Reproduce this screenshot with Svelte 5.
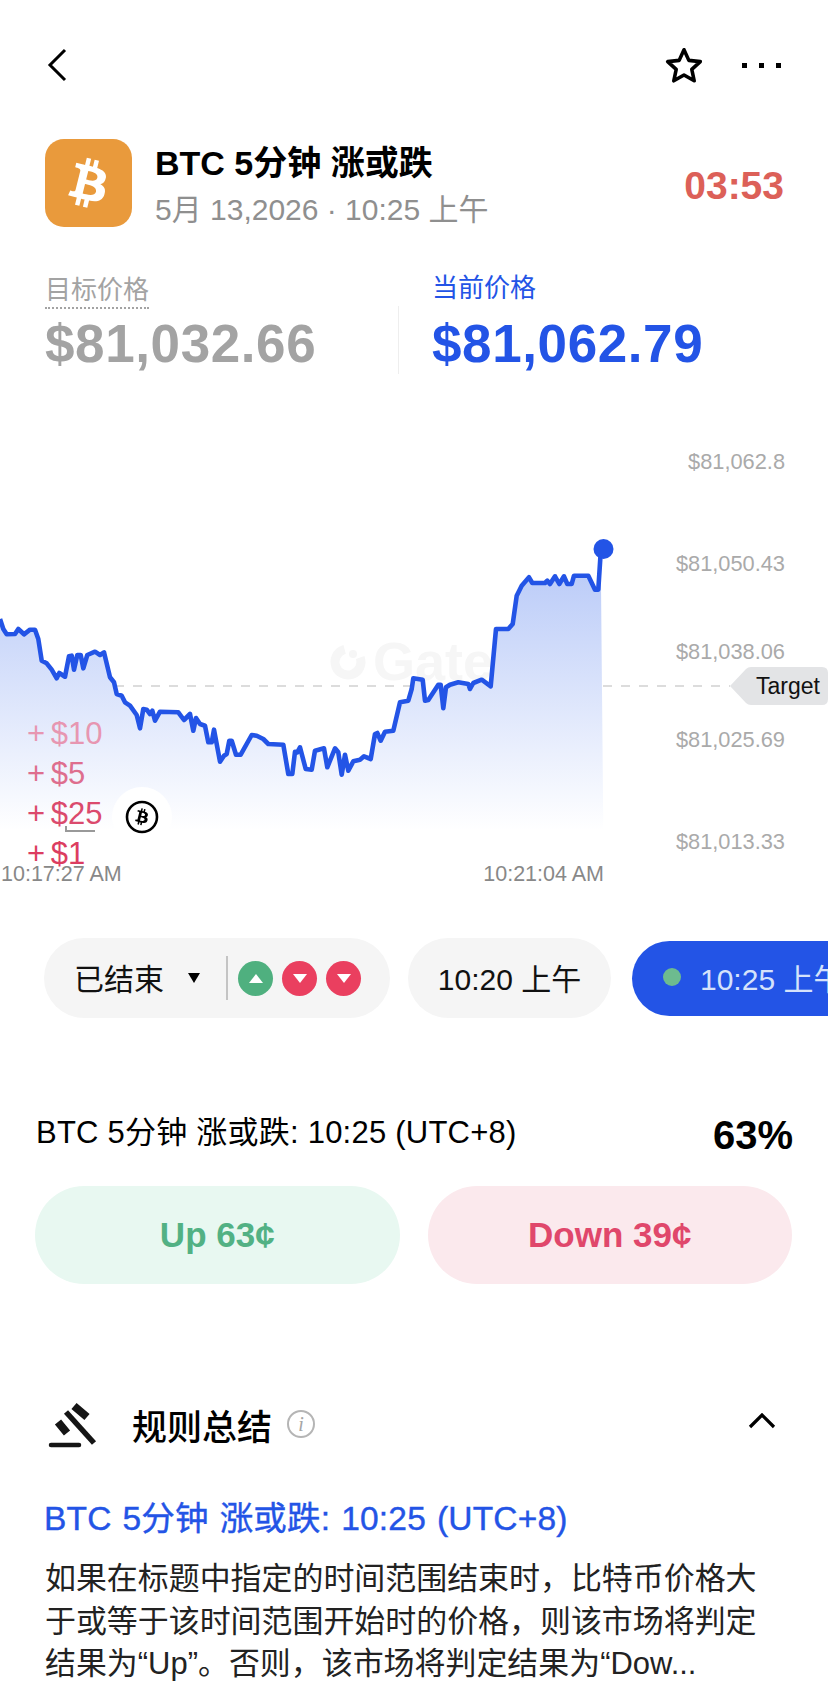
<script>
  const z2 = [[0,600],[10,630],[20,646],[45,645],[55,630],[72,646],[90,632],[105,632],[115,660],[125,725],[140,733],[155,752],[170,778],[178,762],[195,773],[207,712],[215,710],[222,752],[232,708],[242,708],[250,748],[262,708],[285,698],[300,708],[312,700],[330,775],[342,790],[350,825],[365,830],[375,850],[390,860],[410,888],[420,928],[430,870],[440,872],[450,885],[457,875],[465,905],[480,878],[535,880],[552,903],[570,885],[580,935],[588,897],[600,915],[615,920],[625,970],[635,970],[642,932],[660,1028],[672,1010],[680,1005],[688,965],[695,965],[708,1007],[722,1007],[755,948],[770,950],[790,960],[805,975],[850,977],[865,1065],[877,1065],[885,998],[892,1000],[900,985],[917,1050],[935,1052],[945,995],[972,988],[982,1045],[1005,988],[1015,1000],[1025,1067],[1035,1007],[1045,1055],[1060,1027],[1080,1022],[1092,1012],[1112,1020],[1125,945],[1132,942],[1142,965],[1155,938],[1180,935],[1200,850],[1225,845],[1235,810],[1240,778]];
  const z3 = [[68,782],[75,845],[85,843],[115,797],[122,797],[130,868],[138,805],[150,797],[175,790],[205,795],[210,810],[220,792],[245,782],[272,802],[288,630],[325,630],[338,615],[350,530],[365,500],[387,475],[397,492],[435,492],[442,485],[450,495],[465,472],[478,495],[492,472],[502,495],[515,495],[522,470],[565,470],[585,512],[595,512],[602,400]];
  const pts = [
    ...z2.map(([x, y]) => [x / 3, y / 3 + 420]),
    ...z3.map(([x, y]) => [x / 3 + 400, y / 3 + 420])
  ];
  const line = 'M' + pts.map(([x, y]) => x.toFixed(1) + ' ' + y.toFixed(1)).join('L');
  const area = line + 'L603.3 830L0 830Z';
  const axis = [
    { t: '$81,062.8', y: 462 },
    { t: '$81,050.43', y: 564 },
    { t: '$81,038.06', y: 652 },
    { t: '$81,025.69', y: 740 },
    { t: '$81,013.33', y: 842 }
  ];
  const bets = [
    { t: '+ $10', c: '#e796b1' },
    { t: '+ $5', c: '#de6e8e' },
    { t: '+ $25', c: '#db4a6d' },
    { t: '+ $1', c: '#dc3d60' }
  ];
  const btc = 'M17.288 10.291c.24-1.59-.974-2.45-2.64-3.03l.54-2.153-1.315-.33-.525 2.107c-.345-.087-.705-.167-1.064-.25l.526-2.127-1.32-.33-.54 2.165c-.285-.067-.565-.132-.84-.2l-1.815-.45-.35 1.407s.975.225.955.236c.535.136.63.486.615.766l-1.477 5.92c-.075.166-.24.406-.614.314.015.02-.96-.24-.96-.24l-.66 1.51 1.71.426.93.242-.54 2.19 1.32.327.54-2.17c.36.1.705.19 1.05.273l-.51 2.154 1.32.33.545-2.19c2.24.427 3.93.257 4.64-1.774.57-1.637-.03-2.58-1.217-3.196.854-.193 1.5-.76 1.68-1.93h.01zm-3.01 4.22c-.404 1.64-3.157.75-4.05.53l.72-2.9c.896.23 3.757.67 3.33 2.37zm.41-4.24c-.37 1.49-2.662.735-3.405.55l.654-2.64c.744.18 3.137.524 2.75 2.084v.006z';
</script>

<div class="page">
  <nav class="nav">
    <svg class="back" width="20" height="34" viewBox="0 0 20 34" aria-label="back">
      <path d="M18 2 3 17l15 15" />
    </svg>
    <div class="nav-right">
      <svg class="star" width="40" height="38" viewBox="0 0 38 36" aria-label="favourite">
        <path d="M19 3.5 23.6 13.6 34.5 14.8 26.4 22.2 28.7 33 19 27.5 9.3 33 11.6 22.2 3.5 14.8 14.4 13.6Z" />
      </svg>
      <div class="dots"><i></i><i></i><i></i></div>
    </div>
  </nav>

  <header class="head">
    <div class="logo">
      <svg width="79" height="79" viewBox="0 0 24 24"><path d={btc} fill="#fff" fill-rule="evenodd" /></svg>
    </div>
    <div class="head-text">
      <h1>BTC 5分钟 涨或跌</h1>
      <p>5月 13,2026 · 10:25 上午</p>
    </div>
    <div class="timer">03:53</div>
  </header>

  <section class="prices">
    <div class="price target">
      <span class="plabel">目标价格</span>
      <strong>$81,032.66</strong>
    </div>
    <div class="price current">
      <span class="plabel">当前价格</span>
      <strong>$81,062.79</strong>
    </div>
  </section>

  <div class="chart">
    <svg width="828" height="450" viewBox="0 440 828 450">
      <defs>
        <linearGradient id="fill" gradientUnits="userSpaceOnUse" x1="0" y1="560" x2="0" y2="832">
          <stop offset="0" stop-color="#2f62ea" stop-opacity="0.34" />
          <stop offset="1" stop-color="#2f62ea" stop-opacity="0" />
        </linearGradient>
      </defs>
      <circle class="mark-ring" cx="348" cy="663" r="13" />
      <circle cx="353" cy="655" r="4" fill="#f6f6f6" />
      <text class="mark" x="373" y="681">Gate</text>
      <path class="dash" d="M115 687H413M603 687H730" />
      <path d={area} fill="url(#fill)" />
      <path class="line" d={line} />
      <circle cx="603.5" cy="550" r="10" fill="#2354e6" />
      {#each axis as a}
        <text class="axis" x="785" y={a.y + 8} text-anchor="end">{a.t}</text>
      {/each}
      <path d="M730 687 746 670Q748 668 751 668H822Q828 668 828 674V700Q828 706 822 706H751Q748 706 746 704Z" fill="#e3e4e6" />
      <text class="tag" x="756" y="695">Target</text>
      <text class="time" x="1" y="882">10:17:27 AM</text>
      <text class="time" x="604" y="882" text-anchor="end">10:21:04 AM</text>
    </svg>
    <ul class="bets">
      {#each bets as b}
        <li style="color:{b.c}">{b.t}</li>
      {/each}
    </ul>
    <span class="bracket"></span>
    <span class="coin">
      <svg width="36" height="36" viewBox="0 0 36 36">
        <circle cx="18" cy="18" r="15" fill="none" stroke="#000" stroke-width="2.6" />
        <g transform="translate(4.5 4.5) scale(1.125)"><path d={btc} fill="#000" fill-rule="evenodd" /></g>
      </svg>
    </span>
  </div>

  <div class="pills">
    <div class="pill first">
      <span class="ended">已结束</span>
      <i class="caret"></i>
      <i class="sep"></i>
      <span class="res up"><i></i></span>
      <span class="res down"><i></i></span>
      <span class="res down"><i></i></span>
    </div>
    <div class="pill second">10:20 上午</div>
    <div class="pill live"><i class="live-dot"></i>10:25 上午</div>
  </div>

  <div class="market">
    <span>BTC 5分钟 涨或跌: 10:25 (UTC+8)</span>
    <strong>63%</strong>
  </div>

  <div class="buttons">
    <button class="buy up">Up 63¢</button>
    <button class="buy down">Down 39¢</button>
  </div>

  <section class="rules">
    <div class="rules-head">
      <svg class="gavel" width="70" height="60" viewBox="0 0 70 60">
        <path d="M26 18 54 49" stroke-width="5.5" />
        <path d="M18 28 27 39M34 12 47 23" stroke-width="8" />
        <path d="M11 51H39" stroke-width="4.5" stroke-linecap="round" />
      </svg>
      <h2>规则总结</h2>
      <span class="info">i</span>
      <svg class="up-chev" width="28" height="16" viewBox="0 0 28 16"><path d="M2 14 14 2l12 12" /></svg>
    </div>
    <h3>BTC 5分钟 涨或跌: 10:25 (UTC+8)</h3>
    <p>如果在标题中指定的时间范围结束时，比特币价格大于或等于该时间范围开始时的价格，则该市场将判定结果为“Up”。否则，该市场将判定结果为“Dow...</p>
  </section>
</div>

<style>
  :global(body) {
    margin: 0;
    background: #fff;
  }
  .page {
    width: 828px;
    height: 1696px;
    overflow: hidden;
    position: relative;
    background: #fff;
    color: #000;
    font-family: "Liberation Sans", "Noto Sans CJK SC", sans-serif;
  }
  .nav {
    display: flex;
    justify-content: space-between;
    align-items: center;
    height: 36px;
    padding: 47px 47px 0 47px;
  }
  .back path {
    fill: none;
    stroke: #000;
    stroke-width: 3;
  }
  .nav-right {
    display: flex;
    align-items: center;
    gap: 38px;
  }
  .star path {
    fill: none;
    stroke: #000;
    stroke-width: 3.4;
    stroke-linejoin: round;
  }
  .dots {
    display: flex;
    gap: 12px;
  }
  .dots i {
    width: 5px;
    height: 5px;
    background: #000;
  }
  .head {
    display: flex;
    align-items: center;
    margin-top: 50px;
    padding: 0 44px 0 45px;
  }
  .logo {
    width: 87px;
    height: 88px;
    border-radius: 19px;
    background: #e99a3c;
    display: flex;
    align-items: center;
    justify-content: center;
  }
  .head-text {
    margin-left: 23px;
    padding-top: 6px;
  }
  h1 {
    margin: 0;
    font-size: 34px;
    line-height: 48px;
    font-weight: 700;
  }
  .head-text p {
    margin: 0;
    font-size: 30px;
    line-height: 46px;
    color: #8f8f8f;
  }
  .timer {
    margin-left: auto;
    padding-top: 6px;
    font-size: 39px;
    font-weight: 700;
    color: #dc6058;
  }
  .prices {
    display: grid;
    grid-template-columns: 353px 1fr;
    margin: 40px 0 0 45px;
  }
  .price {
    display: flex;
    flex-direction: column;
    align-items: flex-start;
  }
  .plabel {
    font-size: 26px;
    line-height: 34px;
  }
  .price strong {
    font-size: 53px;
    line-height: 60px;
    margin-top: 5px;
    letter-spacing: 0.6px;
  }
  .target {
    color: #a3a3a3;
  }
  .target .plabel {
    border-bottom: 2px dotted #a3a3a3;
  }
  .current {
    color: #2354e6;
    border-left: 1px solid #eee;
    padding-left: 33px;
    margin-top: 33px;
  }
  .current .plabel {
    margin-top: -35px;
  }
  .current strong {
    margin-top: 9px;
  }
  .chart {
    position: relative;
    height: 450px;
    margin-top: 65px;
  }
  .chart svg {
    display: block;
  }
  .mark {
    font-size: 54px;
    font-weight: 700;
    fill: #f6f6f6;
  }
  .mark-ring {
    fill: none;
    stroke: #f6f6f6;
    stroke-width: 9;
    stroke-dasharray: 62 20;
    transform-origin: 348px 663px;
    transform: rotate(-20deg);
  }
  .dash {
    fill: none;
    stroke: #dcdcdc;
    stroke-width: 2;
    stroke-dasharray: 9 9;
  }
  .line {
    fill: none;
    stroke: #2354e6;
    stroke-width: 4.6;
    stroke-linejoin: round;
  }
  .axis {
    font-size: 21.8px;
    fill: #aaa;
  }
  .tag {
    font-size: 23px;
    fill: #111;
  }
  .time {
    font-size: 21.5px;
    fill: #888;
  }
  .bets {
    list-style: none;
    margin: 0;
    padding: 0;
    position: absolute;
    left: 27px;
    top: 275px;
  }
  .bets li {
    height: 40px;
    line-height: 40px;
    font-size: 31px;
    word-spacing: -3px;
  }
  .bracket {
    position: absolute;
    left: 65px;
    top: 387px;
    width: 28px;
    height: 4px;
    border: solid #999;
    border-width: 0 0 2px 2px;
  }
  .coin {
    position: absolute;
    left: 112px;
    top: 348px;
    width: 60px;
    height: 60px;
    border-radius: 50%;
    background: #fff;
    display: flex;
    align-items: center;
    justify-content: center;
  }
  .pills {
    display: flex;
    align-items: center;
    padding-left: 44px;
    margin-top: 49px;
    height: 80px;
    overflow: hidden;
  }
  .pill {
    height: 80px;
    border-radius: 40px;
    background: #f5f5f5;
    display: flex;
    align-items: center;
    flex: none;
    font-size: 30px;
    color: #111;
  }
  .first {
    width: 346px;
    padding-left: 30px;
    box-sizing: border-box;
  }
  .ended {
    width: 114px;
    margin-bottom: 2px;
  }
  .caret {
    width: 0;
    height: 0;
    border: 6.5px solid transparent;
    border-top: 10px solid #000;
    border-bottom: 0;
  }
  .sep {
    width: 2px;
    height: 44px;
    background: #c4c4c4;
    margin: 0 10px 0 26px;
  }
  .res {
    width: 35px;
    height: 35px;
    border-radius: 50%;
    margin-right: 9px;
    display: flex;
    align-items: center;
    justify-content: center;
  }
  .res.up {
    background: #4fb07f;
  }
  .res.down {
    background: #ea3f5f;
  }
  .res i {
    width: 0;
    height: 0;
    border: 7px solid transparent;
  }
  .res.up i {
    border-bottom: 9px solid #fff;
    border-top: 0;
  }
  .res.down i {
    border-top: 9px solid #fff;
    border-bottom: 0;
  }
  .second {
    width: 203px;
    justify-content: center;
    margin-left: 18px;
    padding-bottom: 2px;
    box-sizing: border-box;
  }
  .live {
    margin-left: 21px;
    height: 75px;
    padding: 0 30px 3px 31px;
    box-sizing: border-box;
    background: #2354e6;
    color: #d5e2fb;
    border-radius: 38px;
  }
  .live-dot {
    width: 18px;
    height: 18px;
    border-radius: 50%;
    background: #6dbb8f;
    margin-right: 19px;
  }
  .market {
    display: flex;
    justify-content: space-between;
    align-items: center;
    height: 50px;
    margin-top: 90px;
    padding: 0 35px 0 36px;
  }
  .market span {
    font-size: 31px;
    letter-spacing: 0.23px;
    margin-bottom: 6.5px;
  }
  .market strong {
    font-size: 40px;
    margin-top: 4.3px;
  }
  .buttons {
    display: flex;
    gap: 28px;
    margin-top: 28px;
    padding: 0 36px 0 35px;
  }
  .buy {
    flex: 1;
    height: 98px;
    border: 0;
    border-radius: 49px;
    font-family: inherit;
    font-size: 35px;
    font-weight: 700;
    padding: 0;
  }
  .buy.up {
    background: #e8f8f1;
    color: #52b184;
  }
  .buy.down {
    background: #fbe9ed;
    color: #e0476b;
  }
  .rules {
    margin-top: 110px;
    padding: 0 36px 0 45px;
  }
  .rules-head {
    display: flex;
    align-items: center;
    height: 60px;
  }
  .gavel {
    margin-left: -5px;
    flex: none;
  }
  .gavel path {
    fill: none;
    stroke: #151515;
  }
  h2 {
    margin: 0 0 0 22px;
    font-size: 35px;
    font-weight: 500;
  }
  .info {
    width: 24px;
    height: 24px;
    margin-left: 15px;
    border: 2.5px solid #b5b5b5;
    border-radius: 50%;
    color: #a5a5a5;
    font: italic 20px/24px "Liberation Serif", serif;
    text-align: center;
  }
  .up-chev {
    margin-left: auto;
    margin-right: 16px;
    margin-top: -6px;
  }
  .up-chev path {
    fill: none;
    stroke: #000;
    stroke-width: 3.2;
  }
  h3 {
    margin: 43px 0 0 -1px;
    font-size: 33.5px;
    line-height: 44px;
    letter-spacing: 0.2px;
    word-spacing: 1.4px;
    font-weight: 400;
    color: #2354e6;
    -webkit-text-stroke: 0.4px #2354e6;
  }
  .rules p {
    margin: 17px 0 0;
    width: 720px;
    font-size: 30.95px;
    line-height: 42.5px;
    color: #222;
  }
</style>
